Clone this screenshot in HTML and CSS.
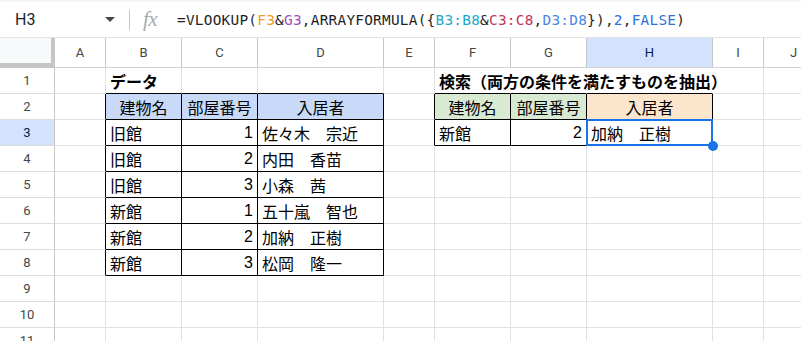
FILE: index.html
```html
<!DOCTYPE html>
<html lang="ja">
<head>
<meta charset="utf-8">
<link rel="stylesheet" href="styles.css">
</head>
<body>
<div class="fbar">
  <div class="namebox">H3</div>
  <div class="caret"></div>
  <div class="vsep"></div>
  <div class="fx">fx</div>
  <div class="formula">=VLOOKUP(<span class="f-or">F3</span>&amp;<span class="f-pu">G3</span>,ARRAYFORMULA({<span class="f-cy">B3:B8</span>&amp;<span class="f-cr">C3:C8</span>,<span class="f-bl">D3:D8</span>}),<span class="f-nb">2</span>,<span class="f-nb">FALSE</span>)</div>
</div>
<div class="sheet">
  <div class="corner"></div>
  <div class="ch">A</div><div class="ch">B</div><div class="ch">C</div><div class="ch">D</div><div class="ch">E</div><div class="ch">F</div><div class="ch">G</div><div class="ch sel">H</div><div class="ch">I</div><div class="ch">J</div>

  <div class="rh">1</div>
  <div class="c"></div><div class="c bb bold">データ</div><div class="c bb"></div><div class="c bb"></div><div class="c"></div><div class="c bb nobr bold">検索（両方の条件を満たすものを抽出）</div><div class="c bb nobr"></div><div class="c bb nobr"></div><div class="c"></div><div class="c"></div>

  <div class="rh">2</div>
  <div class="c br"></div><div class="c br bb hb ctr">建物名</div><div class="c br bb hb ctr">部屋番号</div><div class="c br bb hb ctr">入居者</div><div class="c br"></div><div class="c br bb hg ctr">建物名</div><div class="c br bb hg ctr">部屋番号</div><div class="c br bb ho ctr">入居者</div><div class="c"></div><div class="c"></div>

  <div class="rh sel">3</div>
  <div class="c br"></div><div class="c br bb">旧館</div><div class="c br bb num">1</div><div class="c br bb">佐々木　宗近</div><div class="c br"></div><div class="c br bb">新館</div><div class="c br bb num">2</div><div class="c br bb active">加納　正樹<span class="handle"></span></div><div class="c"></div><div class="c"></div>

  <div class="rh">4</div>
  <div class="c br"></div><div class="c br bb">旧館</div><div class="c br bb num">2</div><div class="c br bb">内田　香苗</div><div class="c"></div><div class="c"></div><div class="c"></div><div class="c"></div><div class="c"></div><div class="c"></div>

  <div class="rh">5</div>
  <div class="c br"></div><div class="c br bb">旧館</div><div class="c br bb num">3</div><div class="c br bb">小森　茜</div><div class="c"></div><div class="c"></div><div class="c"></div><div class="c"></div><div class="c"></div><div class="c"></div>

  <div class="rh">6</div>
  <div class="c br"></div><div class="c br bb">新館</div><div class="c br bb num">1</div><div class="c br bb">五十嵐　智也</div><div class="c"></div><div class="c"></div><div class="c"></div><div class="c"></div><div class="c"></div><div class="c"></div>

  <div class="rh">7</div>
  <div class="c br"></div><div class="c br bb">新館</div><div class="c br bb num">2</div><div class="c br bb">加納　正樹</div><div class="c"></div><div class="c"></div><div class="c"></div><div class="c"></div><div class="c"></div><div class="c"></div>

  <div class="rh">8</div>
  <div class="c br"></div><div class="c br bb">新館</div><div class="c br bb num">3</div><div class="c br bb">松岡　隆一</div><div class="c"></div><div class="c"></div><div class="c"></div><div class="c"></div><div class="c"></div><div class="c"></div>

  <div class="rh">9</div>
  <div class="c"></div><div class="c"></div><div class="c"></div><div class="c"></div><div class="c"></div><div class="c"></div><div class="c"></div><div class="c"></div><div class="c"></div><div class="c"></div>

  <div class="rh">10</div>
  <div class="c"></div><div class="c"></div><div class="c"></div><div class="c"></div><div class="c"></div><div class="c"></div><div class="c"></div><div class="c"></div><div class="c"></div><div class="c"></div>

  <div class="rh">11</div>
  <div class="c"></div><div class="c"></div><div class="c"></div><div class="c"></div><div class="c"></div><div class="c"></div><div class="c"></div><div class="c"></div><div class="c"></div><div class="c"></div>
</div>
</body>
</html>
```
FILE: styles.css
```css
html, body {
  margin: 0;
  padding: 0;
  background: #fff;
}
body {
  width: 801px;
  height: 341px;
  overflow: hidden;
  font-family: Roboto, "Noto Sans CJK JP", sans-serif;
}

/* formula bar */
.fbar {
  display: flex;
  align-items: center;
  height: 38px;
  box-sizing: border-box;
  border-top: 2px solid #f3f5f8;
  border-bottom: 1px solid #e1e3e1;
}
.namebox {
  width: 105px;
  box-sizing: border-box;
  padding-left: 15px;
  font-size: 16px;
  color: #1f1f1f;
}
.caret {
  width: 0;
  height: 0;
  border-left: 5px solid transparent;
  border-right: 5px solid transparent;
  border-top: 5px solid #444746;
}
.vsep {
  width: 1px;
  height: 20px;
  background: #c7c7c7;
  margin-left: 14px;
}
.fx {
  margin-left: 13px;
  width: 20px;
  font-family: "Liberation Serif", serif;
  font-style: italic;
  font-size: 21px;
  line-height: 1;
  color: #a9abae;
  letter-spacing: -0.5px;
}
.formula {
  margin-left: 14px;
  font-family: "DejaVu Sans Mono", monospace;
  font-size: 14.4px;
  letter-spacing: 0.25px;
  color: #1f1f1f;
  white-space: nowrap;
}
.f-or { color: #f29b21; }
.f-pu { color: #9a4fb8; }
.f-cy { color: #1ca8cc; }
.f-cr { color: #c0345e; }
.f-bl { color: #4a86e8; }
.f-nb { color: #2f6fe0; }

/* grid */
.sheet {
  display: grid;
  grid-template-columns: 55px 51px 76px 76px 126px 51px 76px 76px 126px 51px 60px;
  grid-template-rows: 30px repeat(11, 26px);
}
.corner {
  box-sizing: border-box;
  background: #f8f9fa;
  border-right: 4px solid #c4c7c5;
  border-bottom: 5px solid #c4c7c5;
}
.ch {
  box-sizing: border-box;
  display: flex;
  align-items: center;
  justify-content: center;
  border-right: 1px solid #c4c7c5;
  border-bottom: 1px solid #d0d3d6;
  font-size: 13px;
  color: #444746;
}
.rh {
  box-sizing: border-box;
  display: flex;
  align-items: center;
  justify-content: center;
  border-right: 1px solid #c4c7c5;
  border-bottom: 1px solid #dcdcdc;
  font-size: 13px;
  color: #444746;
}
.sel {
  background: #d3e3fd;
  color: #041e49;
}
.c {
  box-sizing: border-box;
  display: flex;
  align-items: center;
  min-width: 0;
  padding: 0 4px;
  border-right: 1px solid #e1e1e1;
  border-bottom: 1px solid #e1e1e1;
  white-space: nowrap;
  font-family: "Liberation Sans", "Noto Sans CJK JP", sans-serif;
  font-size: 16px;
  color: #000;
}
.bold { font-weight: bold; }
.bb { border-bottom-color: #000; }
.br { border-right-color: #000; }
.nobr { border-right-color: transparent; }
.num { justify-content: flex-end; }
.ctr { justify-content: center; }
.hb { background: #c9daf8; }
.hg { background: #d9ead3; }
.ho { background: #fce5cd; }

.active {
  position: relative;
  z-index: 2;
}
.active::after {
  content: "";
  position: absolute;
  top: -1px;
  left: -1px;
  right: -1px;
  bottom: -1px;
  border: 2px solid #1a73e8;
}
.handle {
  position: absolute;
  right: -6px;
  bottom: -6px;
  width: 10px;
  height: 10px;
  border-radius: 50%;
  background: #1a73e8;
  z-index: 3;
}
```
